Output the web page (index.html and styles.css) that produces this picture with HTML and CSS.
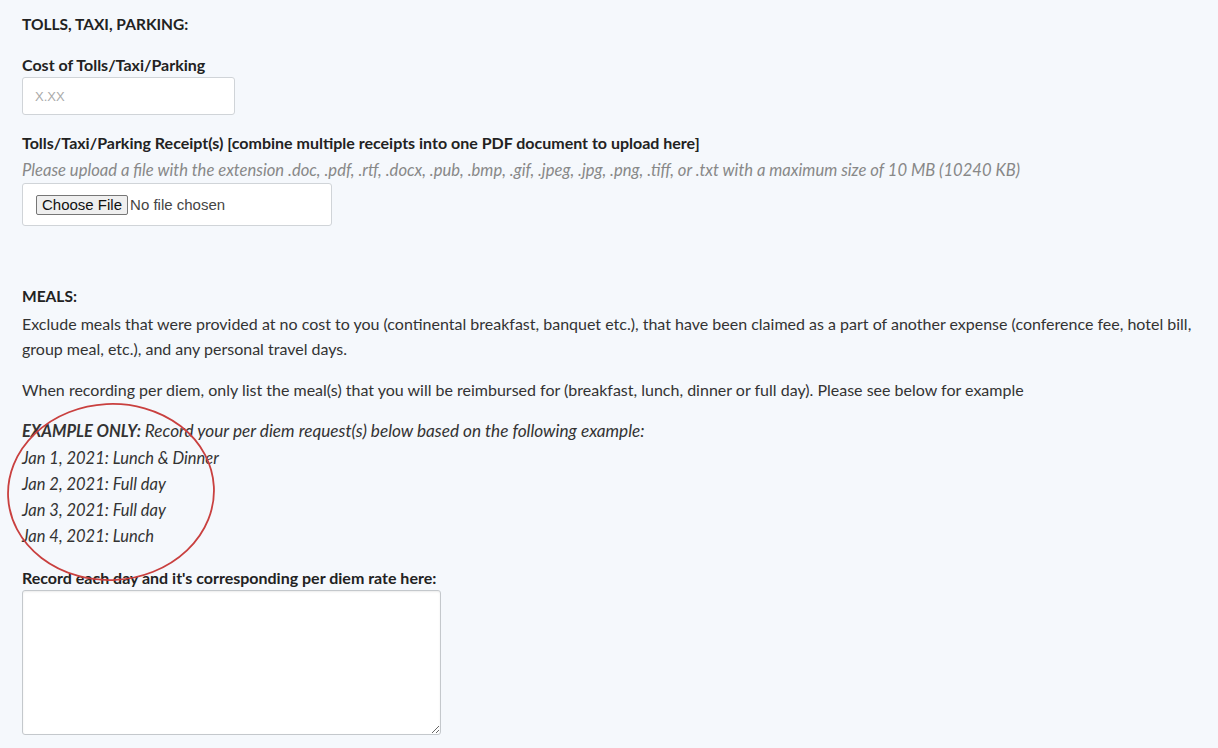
FILE: index.html
```html
<!DOCTYPE html>
<html lang="en">
<head>
  <meta charset="UTF-8">
  <meta name="viewport" content="width=device-width, initial-scale=1.0">
  <title>Expense Reimbursement</title>
  <link rel="stylesheet" href="styles.css">
</head>
<body>
  <form class="expense-form">
    <section class="group">
      <h3 class="group-title">TOLLS, TAXI, PARKING:</h3>

      <div class="field">
        <label for="tolls-cost">Cost of Tolls/Taxi/Parking</label>
        <input type="text" id="tolls-cost" class="text-input" placeholder="X.XX">
      </div>

      <div class="field">
        <label for="tolls-receipt">Tolls/Taxi/Parking Receipt(s) [combine multiple receipts into one PDF document to upload here]</label>
        <p class="help">Please upload a file with the extension .doc, .pdf, .rtf, .docx, .pub, .bmp, .gif, .jpeg, .jpg, .png, .tiff, or .txt with a maximum size of 10 MB (10240 KB)</p>
        <input type="file" id="tolls-receipt" class="file-input">
      </div>
    </section>

    <section class="group meals">
      <h3 class="group-title">MEALS:</h3>
      <p>Exclude meals that were provided at no cost to you (continental breakfast, banquet etc.), that have been claimed as a part of another expense (conference fee, hotel bill, group meal, etc.), and any personal travel days.</p>
      <p>When recording per diem, only list the meal(s) that you will be reimbursed for (breakfast, lunch, dinner or full day). Please see below for example</p>

      <div class="example">
        <svg class="circle-mark" width="230" height="200" viewBox="0 0 230 200">
          <ellipse cx="111" cy="101" rx="103" ry="88" transform="rotate(-3 111 101)" fill="none" stroke="#c9403f" stroke-width="1.8"/>
        </svg>
        <p><strong>EXAMPLE ONLY:</strong> <span class="example-note">Record your per diem request(s) below based on the following example:</span></p>
        <p>Jan 1, 2021: Lunch &amp; Dinner</p>
        <p>Jan 2, 2021: Full day</p>
        <p>Jan 3, 2021: Full day</p>
        <p>Jan 4, 2021: Lunch</p>
      </div>

      <div class="field">
        <label for="per-diem">Record each day and it's corresponding per diem rate here:</label>
        <textarea id="per-diem" class="text-area"></textarea>
      </div>
    </section>
  </form>
</body>
</html>
```

FILE: styles.css
```css
body {
  margin: 0;
  padding: 0;
  background-color: #f5f8fc;
  color: #333;
  font-family: Lato, "Open Sans", Arial, sans-serif;
  font-size: 16px;
  line-height: 25px;
}

.expense-form {
  padding: 12px 22px 20px;
}

.group-title {
  margin: 0;
  font-size: 15.5px;
  font-weight: bold;
  color: #222;
}

.field {
  margin-top: 15px;
}

.field label {
  display: block;
  font-weight: bold;
  color: #222;
}

.help {
  margin: 3px 0 0;
  font-size: 16.6px;
  font-style: italic;
  color: #888;
}

.text-input {
  box-sizing: border-box;
  width: 213px;
  height: 38px;
  padding: 0 12px;
  border: 1px solid #d0d4d8;
  border-radius: 3px;
  background: white;
  font-family: Arial, "Liberation Sans", sans-serif;
  font-size: 13px;
}

.text-input::placeholder {
  color: #aaa;
}

.file-input {
  box-sizing: border-box;
  width: 310px;
  height: 43px;
  padding: 11px 13px;
  border: 1px solid #d0d4d8;
  border-radius: 3px;
  background: white;
  color: #444;
  font-family: "Liberation Sans", Arial, sans-serif;
  font-size: 15px;
  line-height: 18px;
}

.file-input::file-selector-button {
  font: inherit;
  color: #111;
  margin-right: 2px;
  padding: 0 5px;
  background: #efefef;
  border: 1px solid #767676;
  border-radius: 2px;
}

.meals {
  margin-top: 58px;
}

.meals .group-title {
  margin-bottom: 2px;
}

.meals p {
  margin: 0 0 16px;
}

.example {
  position: relative;
  font-size: 16.5px;
  line-height: 26px;
  font-style: italic;
}

.example p {
  margin: 0;
}

.example p:first-of-type {
  margin-bottom: 1px;
}

.example-note {
  font-size: 17.2px;
}

.circle-mark {
  position: absolute;
  left: -22px;
  top: -27px;
  pointer-events: none;
  z-index: 2;
}

.meals .field {
  margin-top: 16px;
}

.text-area {
  display: block;
  box-sizing: border-box;
  width: 419px;
  height: 145px;
  border: 1px solid #c4c8cc;
  border-radius: 3px;
  background: white;
  box-shadow: inset 0 1px 2px rgba(0, 0, 0, 0.08);
}
```
